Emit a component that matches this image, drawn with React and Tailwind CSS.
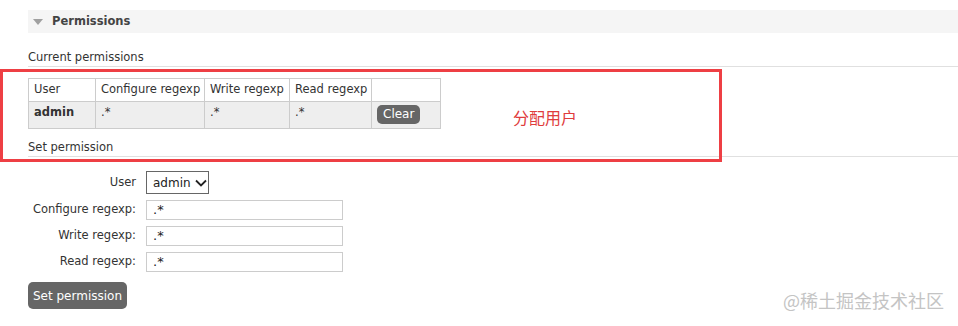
export default function App() {
  const font = { fontFamily: '"DejaVu Sans", Verdana, sans-serif' };
  return (
    <div className="relative w-[958px] h-[326px] overflow-hidden bg-white text-[11.5px] text-[#333]" style={font}>
      <div className="pt-[10px] pl-[28px]">
        <div className="h-[23px] bg-[#f5f5f5] flex items-center">
          <svg width="10" height="6" viewBox="0 0 10 6" className="ml-[5px]">
            <polygon points="0,0 10,0 5,6" fill="#a0a0a0" />
          </svg>
          <span className="ml-[9px] font-bold text-[#444] text-[11.5px]">Permissions</span>
        </div>

        <div className="mt-[17px] pb-[2px] border-b border-[#e0e0e0] leading-[14px]">Current permissions</div>

        <table className="mt-[11px] border-collapse border border-[#ccc]">
          <tbody>
            <tr className="h-[23px] bg-white">
              <td className="border border-[#ccc] pl-[5px] w-[67px]">User</td>
              <td className="border border-[#ccc] pl-[5px] w-[109px]">Configure regexp</td>
              <td className="border border-[#ccc] pl-[5px] w-[85px]">Write regexp</td>
              <td className="border border-[#ccc] pl-[5px] w-[82px]">Read regexp</td>
              <td className="border border-[#ccc] w-[69px]"></td>
            </tr>
            <tr className="h-[27px] bg-[#eeeeee]">
              <td className="border border-[#ccc] pl-[5px] font-bold align-top pt-[2px]">admin</td>
              <td className="border border-[#ccc] pl-[5px] align-top pt-[2px]">.*</td>
              <td className="border border-[#ccc] pl-[5px] align-top pt-[2px]">.*</td>
              <td className="border border-[#ccc] pl-[5px] align-top pt-[2px]">.*</td>
              <td className="border border-[#ccc] pl-[5px] align-top pt-[3px]">
                <span className="inline-block bg-[#666] text-white rounded-[5px] px-[6px] h-[19px] leading-[19px] text-[12px]">Clear</span>
              </td>
            </tr>
          </tbody>
        </table>

        <div className="mt-[11px] pb-[2px] border-b border-[#e0e0e0] leading-[14px]">Set permission</div>

        <div className="mt-[14px] flex flex-col gap-[6px]">
          <div className="flex items-center">
            <div className="w-[108px] text-right">User</div>
            <div className="ml-[10px] h-[23px] w-[63px] border border-[#666] flex items-center pl-[6px] text-[12px] text-[#222]">
              admin
              <svg width="12" height="8" viewBox="0 0 12 8" className="ml-[4px]">
                <polyline points="1,1.5 6,6.5 11,1.5" fill="none" stroke="#222" strokeWidth="1.8" />
              </svg>
            </div>
          </div>
          {["Configure regexp:", "Write regexp:", "Read regexp:"].map((l) => (
            <div key={l} className="flex items-center">
              <div className="w-[108px] text-right">{l}</div>
              <div className="ml-[10px] h-[20px] w-[197px] border border-[#ccc] pl-[6px] text-[13px] leading-[18px] text-[#222]">.*</div>
            </div>
          ))}
        </div>

        <div className="mt-[10px] inline-flex items-center justify-center w-[99px] h-[27px] bg-[#666] text-white rounded-[5px] text-[12px]">Set permission</div>
      </div>

      <div className="absolute left-0 top-[69px] w-[722px] h-[93px] border-[3px] border-[#ee3f44] pointer-events-none"></div>
      <div className="absolute left-[513px] top-[105px] text-[16px] text-[#e03c3c]" style={{ fontFamily: '"Noto Sans CJK SC", sans-serif' }}>分配用户</div>
      <div className="absolute left-[783px] top-[287px] text-[18px] text-[#c4c4c4]" style={{ fontFamily: '"Noto Sans CJK SC", sans-serif' }}>@稀土掘金技术社区</div>
    </div>
  );
}
